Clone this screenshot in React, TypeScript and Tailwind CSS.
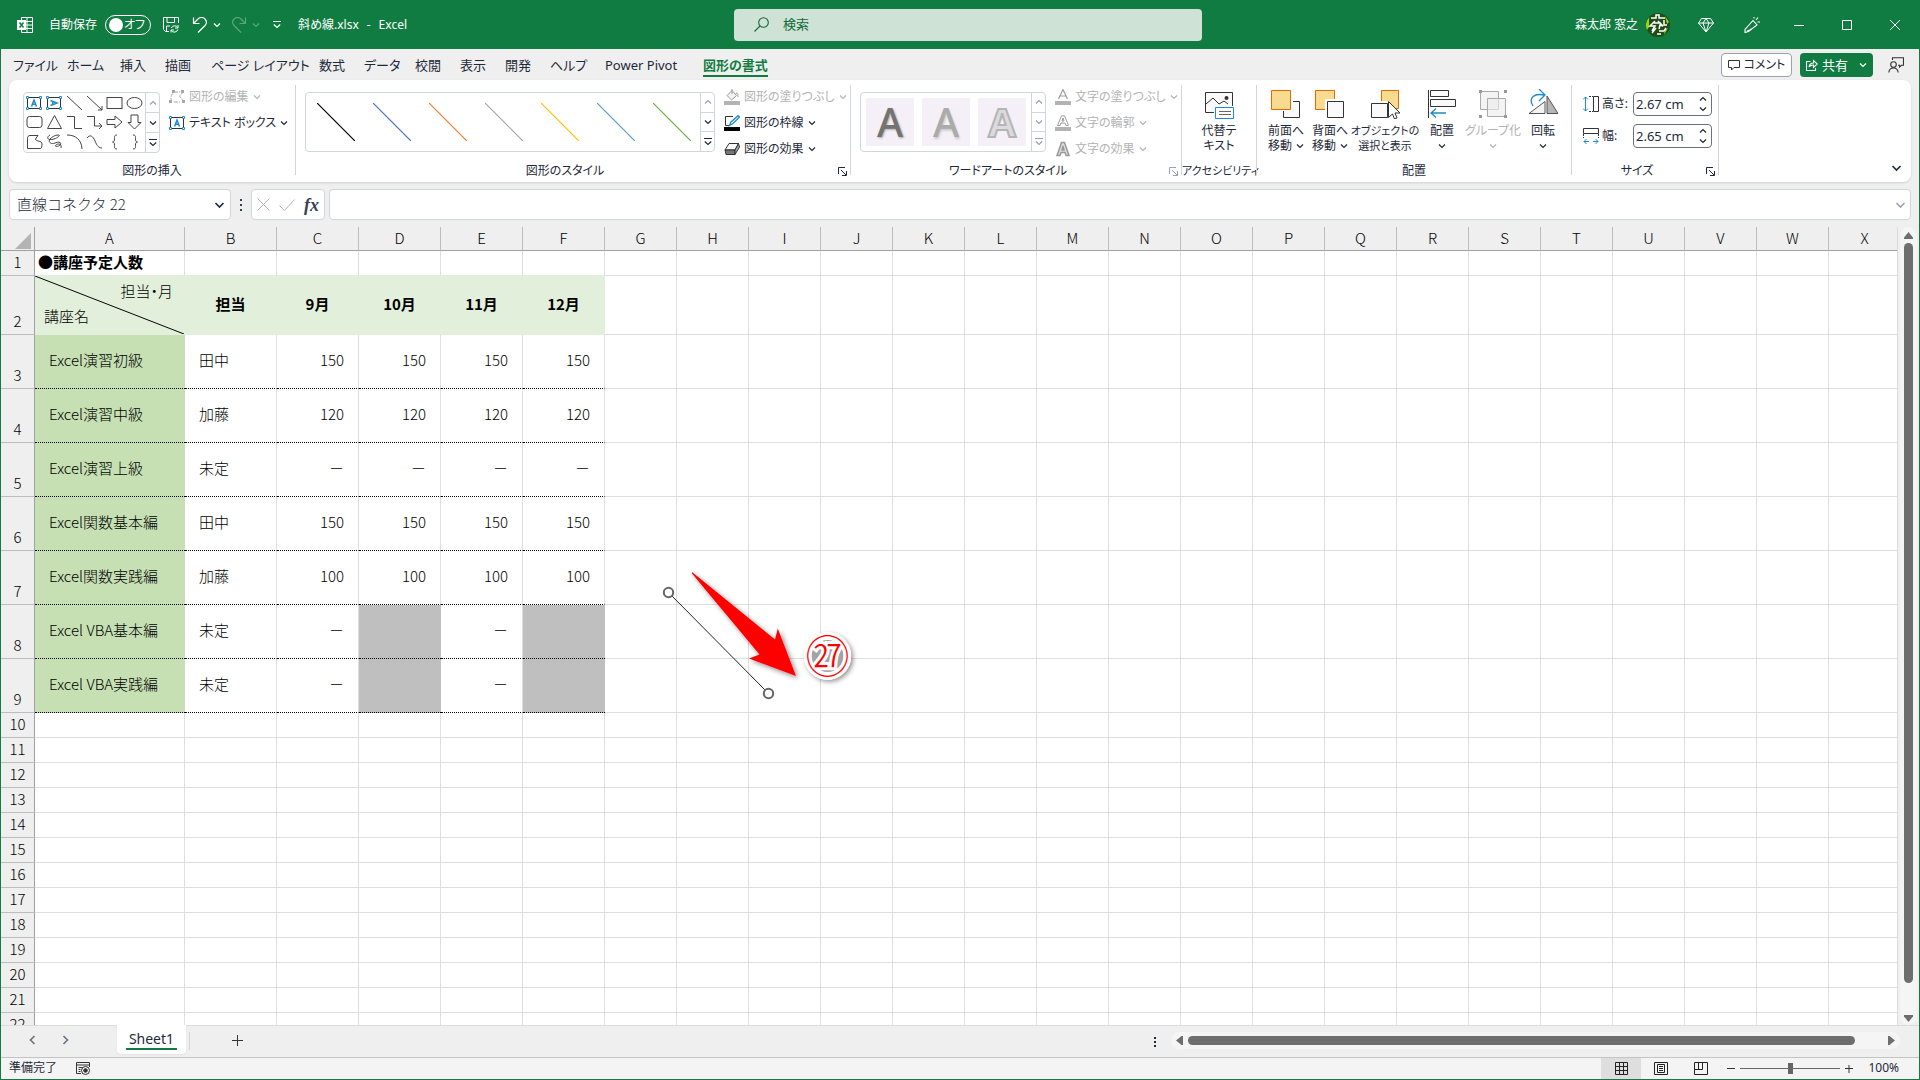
import type { ReactNode } from "react";
import clsx from "clsx";

type IconProps = { className?: string };

const Chevron = ({ className = "h-[6px] w-[8px]" }: IconProps) => (
  <svg viewBox="0 0 8 6" className={clsx("shrink-0", className)} fill="none" stroke="currentColor" strokeWidth="1.2">
    <path d="M1 1.5 4 4.5 7 1.5" />
  </svg>
);

const ExcelIcon = () => (
  <svg viewBox="0 0 16 16" className="h-4 w-4 shrink-0" fill="none" stroke="#fff">
    <path d="M4.5 3V.5h11v15h-11V13M10 .5v15M4.5 4.5h11M9 8h6.5M4.5 11.5h11" />
    <rect x="0" y="3" width="9" height="10" fill="#fff" stroke="none" />
    <path d="m2.5 5.5 4 5m0-5-4 5" stroke="#107c41" strokeWidth="1.5" />
  </svg>
);

const SaveIcon = () => (
  <svg viewBox="0 0 16 16" className="h-4 w-4 shrink-0" fill="none" stroke="#fff">
    <path d="M6 14.5H2.5l-2-2V.5h15V6M4 .5v5h7.5v-5M3.5 14.5V9H7" />
    <path d="M15 8v3h-3M8 15.5V13h3M8.3 11a3.6 3.6 0 0 1 6.4-.5M14.8 12.5a3.6 3.6 0 0 1-6.5 1" />
  </svg>
);

const UndoIcon = ({ className }: IconProps) => (
  <svg viewBox="0 0 16 16" className={clsx("h-4 w-4 shrink-0", className)} fill="none" stroke="currentColor" strokeWidth="1.2">
    <path d="M1.5.5v6h6M1.5 6.5 6 2a4.800 4.800 0 0 1 7 0c1.800 2 1.800 4.500 0 6.500L6 15.500" />
  </svg>
);

const MoreIcon = () => (
  <svg viewBox="0 0 10 9" className="h-[9px] w-[10px] shrink-0" fill="none" stroke="currentColor" strokeWidth="1.2">
    <path d="M1 1.5h8M1.8 4.5 5 7.5l3.2-3" />
  </svg>
);

const Avatar = () => (
  <svg viewBox="0 0 24 24" className="h-6 w-6 shrink-0">
    <circle cx="12" cy="12" r="12" fill="#1f4d16" />
    <path d="M3.5 4A12 12 0 0 0 1 17l2-3V7zM19 3l4 6-2 2zM22 15l-4 7 1-5z" fill="#9cd510" />
    <path d="M5 5h5V2h3v3h6M9 8l-5 5h5l-3 5M12 8l5 5-3-1-1 4M18 7v5h3M6 20l4-5M13 18h5l2-3M11 21h4M8 10h7" fill="none" stroke="#fff" strokeWidth="1.5" />
  </svg>
);

const DiamondIcon = () => (
  <svg viewBox="0 0 16 16" className="h-4 w-4 shrink-0" fill="none" stroke="#fff">
    <path d="M3.5 1.5h9l3 4.5L8 15 .5 6zM.5 6h15M8 1.5 5 6l3 9 3-9z" />
  </svg>
);

const PenIcon = () => (
  <svg viewBox="0 0 16 16" className="h-4 w-4 shrink-0" fill="none" stroke="#fff" strokeWidth="1.1">
    <path d="M9 3.5 13 8l-8.5 6.5-3.5 1v-3zM3 14l4-1.5v-1M10 1.5V0M12 3l2-2.5M13.5 5H16" />
  </svg>
);

const PersonChatIcon = () => (
  <svg viewBox="0 0 16 16" className="h-4 w-4 shrink-0" fill="none" stroke="#333" strokeWidth="1.1">
    <circle cx="5.5" cy="7.5" r="2.8" />
    <path d="M.8 15.5c.3-3 2-4.5 4.7-4.5s4.3 1.5 4.7 4.5M4.5 3V.8h11v7.5h-2L11.5 10V8.3h-1.5" />
  </svg>
);

const ShareIcon = () => (
  <svg viewBox="0 0 12 12" className="h-3 w-3 shrink-0" fill="none" stroke="#fff" strokeWidth="1.1">
    <path d="M4.5 2.5h-4v9h9V9M3 8c.5-3 2-4 4.5-4V1.5L11.3 5 7.5 8.5V6C5.5 6 4 6.5 3 8z" />
  </svg>
);

const EditShapeIcon = () => (
  <svg viewBox="0 0 16 14" className="h-[14px] w-4 shrink-0" fill="none" stroke="#a8a8a8">
    <path d="M5 2h6M2 12V8c0-3 1-4 3-5M5 12h6M14.5 1.5 10.5 6l4 5" strokeDasharray="4 1" />
    <path d="M0 10h3v3H0zM3 0h3v3H3zM12 0h3v3h-3zM13 10h3v3h-3z" fill="#a8a8a8" stroke="none" />
  </svg>
);

const TextBoxIcon = ({ turned }: { turned?: boolean }) => (
  <svg viewBox="0 0 16 14" className="h-[14px] w-4 shrink-0" fill="none">
    <rect x="1.5" y="1.5" width="13" height="11" stroke="#333" />
    <path d="M.5.5h2v2h-2zM13.5.5h2v2h-2zM.5 11.5h2v2h-2zM13.5 11.5h2v2h-2z" fill="#fff" stroke="#1e8bcd" />
    <path
      d="M5.5 10.5 8 4l2.5 6.5M6.3 8.3h3.4"
      stroke="#1e8bcd"
      strokeWidth="1.5"
      transform={turned ? "rotate(90 8 7)" : undefined}
    />
  </svg>
);

const shapeIcons: ReactNode[] = [
  <path d="M1 1 16 15" />,
  <g>
    <path d="M1 1 16 15" />
    <path d="M16 11v4h-4" />
  </g>,
  <rect x="1" y="2.5" width="15" height="11" />,
  <ellipse cx="8.5" cy="8" rx="7.5" ry="5.5" />,
  <rect x="1" y="2.5" width="15" height="11" rx="2.5" />,
  <path d="M8.5 1.5 15.5 14.5h-14z" />,
  <path d="M1 2.5h7.5v12H16" />,
  <path d="M1 2.5h7.5v9.5H16M13 9l3 3-3 3" />,
  <path d="M1 5.5h8V2l7 6-7 6v-3.500H1z" />,
  <path d="M5 1v7.5H2l6.5 6.5L15 8.5h-3V1z" />,
  <path d="M1.5 14.5v-10c0-2 1-3 2.5-3h8L9.5 5c0 3 6.5 1 6.5 5 0 2-.5 4.5-1.5 4.5z" />,
  <path d="M4 1c-5 3-1 6 4 4s7-4 4-4-6 2-8 4 0 6 5 4 7 0 5 2-6 2-4 0 6-1 5 3" />,
  <path d="M1 1c9 0 14.5 5 15 14" />,
  <path d="M1 4c3-4 6-2 8 3s4 7 7 7" />,
  <path d="M11 1C8 1 8.5 3 8.5 5S8 8 6.500 8C8 8 8.5 9 8.5 11s-.5 4 2.5 4" />,
  <path d="M7 1c3 0 2.5 2 2.5 4s.5 3 2 3c-1.500 0-2 1-2 3s.5 4-2.5 4" />,
];

const GalleryScroll = ({ disabled }: { disabled?: boolean }) => (
  <div className={clsx("flex w-[14px] shrink-0 flex-col divide-y divide-gray-300 border-l border-gray-300", disabled ? "text-gray-400" : "text-gray-800")}>
    <button className="flex flex-1 items-center justify-center text-gray-400" aria-label="前の行">
      <Chevron className="h-[6px] w-[8px] rotate-180" />
    </button>
    <button className="flex flex-1 items-center justify-center" aria-label="次の行">
      <Chevron />
    </button>
    <button className="flex flex-1 items-center justify-center" aria-label="その他">
      <MoreIcon />
    </button>
  </div>
);

const Launcher = ({ disabled }: { disabled?: boolean }) => (
  <button className={clsx("flex w-4 items-center justify-center", disabled ? "text-gray-400" : "text-gray-800")} aria-label="詳細">
    <svg viewBox="0 0 9 9" className="h-[9px] w-[9px]" fill="none" stroke="currentColor">
      <path d="M.5 7V.5H7M3 3l5 5M8.5 4v4.5H4" />
    </svg>
  </button>
);

type GroupProps = {
  label: string;
  width: string;
  launcher?: "on" | "off";
  small?: boolean;
  children: ReactNode;
};

const Group = ({ label, width, launcher, small, children }: GroupProps) => (
  <section className={clsx("flex shrink-0", width)}>
    <div className="flex min-w-0 flex-1 flex-col">
      <div className="flex h-[83px] items-start pt-3">{children}</div>
      <div className={clsx("flex h-4 leading-4", small ? "text-[11px]" : "text-[12px]")}>
        <span className="flex-1 text-center whitespace-nowrap">{label}</span>
        {launcher && <Launcher disabled={launcher === "off"} />}
      </div>
    </div>
    <div className="mt-[5px] h-[90px] w-px bg-gray-300" />
  </section>
);

type MenuItemProps = { icon: ReactNode; label: string; disabled?: boolean };

const MenuItem = ({ icon, label, disabled }: MenuItemProps) => (
  <button className={clsx("flex h-4 items-center gap-1 text-[12px] leading-4 whitespace-nowrap", disabled ? "text-[#b3b3b3]" : "text-gray-800")}>
    {icon}
    <span>{label}</span>
    <Chevron />
  </button>
);

const FillIcon = () => (
  <svg viewBox="0 0 16 16" className="h-4 w-4 shrink-0">
    <path d="M0 12h16v4H0z" fill="#b3b3b3" />
    <path d="m8 1.5 4.5 5L7.5 11 3 6.5zM8 0v5M12 4c2 0 2 2 2 4" fill="#f3f3f3" stroke="#999" />
  </svg>
);

const OutlineIcon = () => (
  <svg viewBox="0 0 16 16" className="h-4 w-4 shrink-0" fill="none">
    <path d="M0 12h16v4H0z" fill="#000" />
    <path d="M9 1.5H1.5v9H5" stroke="#333" />
    <path d="M14 .7 15.5 2 9 8.5l-3.5 2L7 7z" fill="#fff" stroke="#1e8bcd" strokeWidth="1.3" />
  </svg>
);

const EffectIcon = () => (
  <svg viewBox="0 0 16 16" className="h-4 w-4 shrink-0" stroke="#333" strokeLinejoin="round">
    <path d="M5 2.5h9.5L11 9H1z" fill="#fafafa" />
    <path d="M1 9h10v4.5H2z" fill="#777" />
    <path d="m11 9 3.5-6.5L15.5 6 11 13.500z" fill="#aaa" />
  </svg>
);

const LetterIcon = ({ kind }: { kind: "fill" | "outline" | "effect" }) => (
  <svg viewBox="0 0 16 16" className="h-4 w-4 shrink-0" fill="none" stroke="#9e9e9e">
    {kind === "fill" && <path d="M3.5 10 8 .5 12.5 10M5 7h6" strokeWidth="1.2" />}
    {kind === "outline" && <path d="M2.5 10.5 6.5.8h3l4 9.700h-2.500l-1-2.500H6l-1 2.500zM7 6h2L8 3z" />}
    {kind === "effect" && (
      <path d="M2 14.5 6.5 1.5h3L14 14.5h-3l-1-3H6l-1 3zM7 9h2L8 5z" fill="#ddd" stroke="#999" strokeWidth="1.5" />
    )}
    {kind !== "effect" && <path d="M0 12h16v4H0z" fill="#b3b3b3" stroke="none" />}
  </svg>
);

type BigButtonProps = {
  icon: ReactNode;
  lines: string[];
  width: string;
  disabled?: boolean;
  small?: boolean;
  chevron?: "inline" | "below";
};

const BigButton = ({ icon, lines, width, disabled, small, chevron }: BigButtonProps) => (
  <button
    className={clsx(
      "flex shrink-0 flex-col items-center leading-[15px] whitespace-nowrap",
      width,
      small ? "text-[11px]" : "text-[12px]",
      disabled ? "text-[#b3b3b3]" : "text-gray-800",
    )}
  >
    <svg viewBox="0 0 30 30" className="mb-1 h-[30px] w-[30px]" fill="none">
      {icon}
    </svg>
    {lines.map((line, i) => (
      <span key={line} className="flex items-center gap-1">
        {line}
        {chevron === "inline" && i === lines.length - 1 && <Chevron />}
      </span>
    ))}
    {chevron === "below" && (
      <span className="flex h-[15px] items-center">
        <Chevron />
      </span>
    )}
  </button>
);

const altTextIcon = (
  <g>
    <path d="M10 23.5H1.5v-20h27V17" stroke="#333" fill="#fafafa" />
    <path d="m2 15 7-6 6 6M15 15l5-3 4 3" stroke="#333" />
    <circle cx="22.5" cy="9" r="2" fill="#333" />
    <path d="M11.5 18.5h18v11h-18z" fill="#fff" stroke="#1e8bcd" />
    <path d="M15 22.5h12M15 25.5h12" stroke="#666" />
  </g>
);

const frontIcon = (
  <g>
    <path d="M12.5 12.5h16v16h-16z" fill="#fafafa" stroke="#333" />
    <path d="M0 0h22v22H0z" fill="#fff" />
    <path d="M.5 1.5h19v19H.5z" fill="#f8db8f" stroke="#dd6b00" />
  </g>
);

const backIcon = (
  <g>
    <path d="M.5 1.5h19v19H.5z" fill="#f8db8f" stroke="#dd6b00" />
    <path d="M10 10h20v20H10z" fill="#fff" />
    <path d="M12.5 12.5h16v16h-16z" fill="#fafafa" stroke="#333" />
  </g>
);

const selectIcon = (
  <g>
    <path d="M11.5 1.5h17v18h-17z" fill="#f8db8f" stroke="#dd6b00" />
    <path d="M0 12h18v18H0z" fill="#fff" />
    <path d="M1.5 14.5h16v14h-16z" fill="#fafafa" stroke="#333" />
    <path d="M18.5 12.5v16l4-3.5 2 5 2.5-1-2-5h5z" fill="#fff" stroke="#333" />
  </g>
);

const alignIcon = (
  <g>
    <path d="M1.5 1v28" stroke="#333" />
    <path d="M3.5 1.5h18v6h-18zM3.5 10.5h25v7h-25z" stroke="#333" fill="#fafafa" />
    <path d="M4 24h15M9 19.5 4 24l5 4.5" stroke="#1e8bcd" strokeWidth="1.3" />
  </g>
);

const groupIcon = (
  <g>
    <path d="M2.5 2.5h18v18h-18z" stroke="#aaa" fill="#f3f3f3" />
    <path d="M9.5 9.5h18v18h-18z" stroke="#aaa" fill="#ececec" fillOpacity=".6" />
    <path d="M1 1h3v3H1zM26 1h3v3h-3zM1 26h3v3H1zM26 26h3v3h-3z" fill="#999" />
  </g>
);

const rotateIcon = (
  <g>
    <path d="M1 24.5h16V12.5z" fill="#f3f3f3" stroke="#555" />
    <path d="M19 24.5V7l11 17.5z" fill="#b5b5b5" stroke="#555" />
    <path d="M5 17C0 9 6 4 16 6M11 0l6 6-6 6" stroke="#1e8bcd" strokeWidth="1.3" />
  </g>
);

const tabs = [
  { label: "ファイル", width: "w-[54px]" },
  { label: "ホーム", width: "w-[53px]" },
  { label: "挿入", width: "w-[45px]" },
  { label: "描画", width: "w-[46px]" },
  { label: "ページ レイアウト", width: "w-[108px]" },
  { label: "数式", width: "w-[45px]" },
  { label: "データ", width: "w-[51px]" },
  { label: "校閲", width: "w-[45px]" },
  { label: "表示", width: "w-[45px]" },
  { label: "開発", width: "w-[45px]" },
  { label: "ヘルプ", width: "w-[55px]" },
  { label: "Power Pivot", width: "w-[98px]" },
];

const TitleBar = () => (
  <header className="flex h-[49px] shrink-0 items-center bg-[#107c41] text-[12px] text-white">
    <div className="mr-[19px] flex flex-1 items-center pl-[17px]">
      <ExcelIcon />
      <label className="ml-4 flex items-center gap-2">
        自動保存
        <span className="relative flex h-5 w-[46px] items-center justify-between rounded-full border border-white pr-[5px] pl-[3px]">
          <input type="checkbox" className="absolute inset-0 appearance-none" />
          <span className="h-[14px] w-[14px] rounded-full bg-white" />
          オフ
        </span>
      </label>
      <button className="ml-3" aria-label="保存">
        <SaveIcon />
      </button>
      <button className="ml-[13px] flex items-center gap-[5px]" aria-label="元に戻す">
        <UndoIcon />
        <Chevron />
      </button>
      <button className="ml-[10px] flex items-center gap-[5px] text-[#5aa77d]" aria-label="やり直し">
        <UndoIcon className="-scale-x-100" />
        <Chevron />
      </button>
      <button className="ml-3" aria-label="クイック アクセス">
        <MoreIcon />
      </button>
      <span className="ml-4 flex gap-2">
        <span>斜め線.xlsx</span>
        <span>-</span>
        <span>Excel</span>
      </span>
    </div>
    <label className="flex h-8 w-[468px] items-center gap-[14px] rounded bg-[#cee2d6] pl-5 text-[13px] text-[#0f6b39]">
      <svg viewBox="0 0 15 15" className="h-[15px] w-[15px]" fill="none" stroke="currentColor" strokeWidth="1.1">
        <circle cx="9.5" cy="5.5" r="4.8" />
        <path d="M6 9 .5 14.5" />
      </svg>
      <input type="search" placeholder="検索" aria-label="検索" className="flex-1 bg-transparent outline-none placeholder:text-[#0f6b39]" />
    </label>
    <div className="flex flex-1 items-center justify-end pr-5">
      <span>森太郎 窓之</span>
      <span className="ml-2">
        <Avatar />
      </span>
      <button className="ml-7" aria-label="Premium">
        <DiamondIcon />
      </button>
      <button className="ml-[30px]" aria-label="新機能">
        <PenIcon />
      </button>
      <button className="ml-[34px]" aria-label="最小化">
        <svg viewBox="0 0 10 10" className="h-[10px] w-[10px]" stroke="#fff">
          <path d="M0 5.5h10" />
        </svg>
      </button>
      <button className="ml-[38px]" aria-label="最大化">
        <svg viewBox="0 0 10 10" className="h-[10px] w-[10px]" fill="none" stroke="#fff">
          <path d="M.5.5h9v9h-9z" />
        </svg>
      </button>
      <button className="ml-[38px]" aria-label="閉じる">
        <svg viewBox="0 0 10 10" className="h-[10px] w-[10px]" stroke="#fff">
          <path d="m0 0 10 10M10 0 0 10" />
        </svg>
      </button>
    </div>
  </header>
);

const TabBar = () => (
  <nav className="flex h-[31px] shrink-0 items-center pr-2 pl-3 text-[13px] leading-5 whitespace-nowrap">
    {tabs.map((tab) => (
      <a key={tab.label} href="#" className={tab.width}>
        {tab.label}
      </a>
    ))}
    <a href="#" className="mt-[2px] border-b-2 border-[#107c41] font-bold text-[#107c41]">
      図形の書式
    </a>
    <div className="flex-1" />
    <button className="flex h-6 w-[71px] items-center justify-center gap-1 rounded border border-gray-400 bg-white text-[12px]">
      <svg viewBox="0 0 12 12" className="h-3 w-3" fill="none" stroke="#333">
        <path d="M.5 1.5h11v7H6L3.5 11V8.5h-3z" />
      </svg>
      コメント
    </button>
    <button className="ml-2 flex h-6 w-[73px] items-center justify-between rounded bg-[#107c41] px-[6px] text-[13px] text-white">
      <span className="flex items-center gap-1">
        <ShareIcon />
        共有
      </span>
      <Chevron />
    </button>
    <button className="mr-[7px] ml-[15px]" aria-label="プレゼンス">
      <PersonChatIcon />
    </button>
  </nav>
);

const styleLines = ["#000000", "#4472c4", "#ed7d31", "#a5a5a5", "#ffc000", "#5b9bd5", "#70ad47"];

const SizeField = ({ id, label, value, icon }: { id: string; label: string; value: string; icon: ReactNode }) => (
  <div className="flex h-6 items-center">
    <svg viewBox="0 0 16 16" className="h-4 w-4 shrink-0" fill="none">
      {icon}
    </svg>
    <label htmlFor={id} className="w-[34px] pl-[3px] text-[12px] whitespace-nowrap">
      {label}
    </label>
    <div className="flex h-6 w-[79px] items-center rounded border border-gray-500 bg-white pr-1">
      <input id={id} defaultValue={value} className="w-0 flex-1 pl-[2px] text-[13px] leading-5 outline-none" />
      <div className="flex flex-col gap-1">
        <button aria-label="増やす">
          <Chevron className="block h-[6px] w-[8px] rotate-180" />
        </button>
        <button aria-label="減らす">
          <Chevron className="block h-[6px] w-[8px]" />
        </button>
      </div>
    </div>
  </div>
);

const Ribbon = () => (
  <div className="mx-2 flex h-[102px] shrink-0 rounded-lg bg-white text-gray-800 shadow">
    <Group label="図形の挿入" width="w-[287px]">
      <div className="ml-[14px] flex h-[61px] w-[137px] rounded border border-gray-300">
        <div className="grid flex-1 grid-cols-6 place-items-center">
          <TextBoxIcon />
          <TextBoxIcon turned />
          {shapeIcons.map((shape, i) => (
            <svg key={i} viewBox="0 0 17 16" className="h-4 w-[17px]" fill="none" stroke="#444">
              {shape}
            </svg>
          ))}
        </div>
        <GalleryScroll />
      </div>
      <div className="-mt-[3px] ml-[9px] flex flex-col gap-[10px]">
        <MenuItem disabled icon={<EditShapeIcon />} label="図形の編集" />
        <MenuItem icon={<TextBoxIcon />} label="テキスト ボックス" />
      </div>
    </Group>

    <Group label="図形のスタイル" width="w-[555px]" launcher="on">
      <div className="ml-[9px] flex h-[60px] w-[410px] rounded border border-gray-300">
        <div className="flex flex-1 pl-[2px]">
          {styleLines.map((color) => (
            <button key={color} className="flex w-14 items-center justify-center" aria-label="線のスタイル">
              <svg viewBox="0 0 38 38" className="h-[38px] w-[38px]" stroke={color} strokeWidth="1.2">
                <path d="m0 0 38 38" />
              </svg>
            </button>
          ))}
        </div>
        <GalleryScroll />
      </div>
      <div className="-mt-[3px] ml-[9px] flex flex-col gap-[10px]">
        <MenuItem disabled icon={<FillIcon />} label="図形の塗りつぶし" />
        <MenuItem icon={<OutlineIcon />} label="図形の枠線" />
        <MenuItem icon={<EffectIcon />} label="図形の効果" />
      </div>
    </Group>

    <Group label="ワードアートのスタイル" width="w-[331px]" launcher="off">
      <div className="ml-[9px] flex h-[60px] w-[186px] shrink-0 rounded border border-gray-300">
        <div className="flex flex-1 items-center gap-2 pl-[5px] text-[40px] leading-[48px] font-medium">
          <button className="h-12 w-12 bg-[#f5f0f7] text-[#737373] [text-shadow:1px_1px_2px_#aaa]">A</button>
          <button className="h-12 w-12 bg-[#f5f0f7] text-[#ababab] [text-shadow:1px_2px_2px_#ccc]">A</button>
          <button className="h-12 w-12 bg-[#f5f0f7] font-bold text-[#dcdadd] [-webkit-text-stroke:2px_#b5b5b5]">A</button>
        </div>
        <GalleryScroll disabled />
      </div>
      <div className="-mt-[3px] ml-[9px] flex flex-col gap-[10px]">
        <MenuItem disabled icon={<LetterIcon kind="fill" />} label="文字の塗りつぶし" />
        <MenuItem disabled icon={<LetterIcon kind="outline" />} label="文字の輪郭" />
        <MenuItem disabled icon={<LetterIcon kind="effect" />} label="文字の効果" />
      </div>
    </Group>

    <Group label="アクセシビリティ" width="w-[75px]" small>
      <div className="-mt-[3px] flex flex-1 justify-center">
        <BigButton width="w-[60px]" icon={altTextIcon} lines={["代替テ", "キスト"]} />
      </div>
    </Group>

    <Group label="配置" width="w-[315px]">
      <div className="-mt-[3px] flex pl-[7px]">
        <BigButton width="w-[44px]" icon={frontIcon} lines={["前面へ", "移動"]} chevron="inline" />
        <BigButton width="w-[44px]" icon={backIcon} lines={["背面へ", "移動"]} chevron="inline" />
        <BigButton width="w-[66px]" icon={selectIcon} lines={["オブジェクトの", "選択と表示"]} small />
        <BigButton width="w-[48px]" icon={alignIcon} lines={["配置"]} chevron="below" />
        <BigButton width="w-[54px]" icon={groupIcon} lines={["グループ化"]} chevron="below" disabled />
        <BigButton width="w-[46px]" icon={rotateIcon} lines={["回転"]} chevron="below" />
      </div>
    </Group>

    <Group label="サイズ" width="w-[147px]" launcher="on">
      <div className="ml-[11px] flex flex-col gap-2">
        <SizeField
          id="shape-height"
          label="高さ:"
          value="2.67 cm"
          icon={
            <g>
              <path d="M2.5 1v14M0 3.5 2.5 1 5 3.5M0 12.5 2.5 15 5 12.5" stroke="#1e8bcd" />
              <path d="M10.5.5h5v15h-5z" stroke="#333" />
              <path d="M6 .5h4M6 15.5h4" stroke="#333" strokeDasharray="2 1" />
            </g>
          }
        />
        <SizeField
          id="shape-width"
          label="幅:"
          value="2.65 cm"
          icon={
            <g>
              <path d="M.5.5h15v5H.5z" stroke="#333" />
              <path d="M.5 6v4M15.5 6v4" stroke="#333" strokeDasharray="2 1" />
              <path d="M1 13.5h5M10 13.5h5M3.5 11 1 13.5 3.5 16M12.5 11l2.5 2.5-2.5 2.5" stroke="#1e8bcd" />
            </g>
          }
        />
      </div>
    </Group>

    <button className="mr-[9px] mb-[10px] ml-auto self-end" aria-label="リボンを折りたたむ">
      <Chevron className="h-[8px] w-[11px]" />
    </button>
  </div>
);

const FormulaBar = () => (
  <div className="mx-2 mt-[7px] flex h-[31px] shrink-0 items-stretch">
    <div className="flex w-[222px] items-center rounded border border-gray-300 bg-white pr-[5px] pl-[7px]">
      <input
        aria-label="名前ボックス"
        defaultValue="直線コネクタ 22"
        className="w-0 flex-1 text-[15px] font-light text-gray-800 outline-none [font-family:'Noto_Sans_CJK_JP',sans-serif] [font-feature-settings:normal]"
      />
      <Chevron className="h-[8px] w-[11px]" />
    </div>
    <div className="flex w-5 flex-col items-center justify-center gap-[3px]">
      <span className="h-[2px] w-[2px] bg-gray-700" />
      <span className="h-[2px] w-[2px] bg-gray-700" />
      <span className="h-[2px] w-[2px] bg-gray-700" />
    </div>
    <div className="mr-1 flex w-[74px] items-center justify-between rounded border border-gray-300 bg-white px-[5px]">
      <button aria-label="キャンセル">
        <svg viewBox="0 0 13 13" className="h-[13px] w-[13px]" stroke="#b5b5b5">
          <path d="m.5.5 12 12M12.5.5l-12 12" />
        </svg>
      </button>
      <button aria-label="入力">
        <svg viewBox="0 0 16 12" className="h-3 w-4" fill="none" stroke="#b5b5b5">
          <path d="m.5 6.5 5 5 10-11" />
        </svg>
      </button>
      <button className="text-[18px] leading-5 font-bold text-gray-700 italic [font-family:'Liberation_Serif',serif]" aria-label="関数の挿入">
        fx
      </button>
    </div>
    <div className="flex flex-1 items-center rounded border border-gray-300 bg-white pr-1">
      <input aria-label="数式バー" className="flex-1 px-2 outline-none" />
      <Chevron className="h-[8px] w-[11px] text-gray-400" />
    </div>
  </div>
);

const columns = "ABCDEFGHIJKLMNOPQRSTUVWX".split("");
const extraColumns = columns.slice(6);

const courses = [
  { name: "Excel演習初級", teacher: "田中", counts: ["150", "150", "150", "150"] },
  { name: "Excel演習中級", teacher: "加藤", counts: ["120", "120", "120", "120"] },
  { name: "Excel演習上級", teacher: "未定", counts: ["－", "－", "－", "－"] },
  { name: "Excel関数基本編", teacher: "田中", counts: ["150", "150", "150", "150"] },
  { name: "Excel関数実践編", teacher: "加藤", counts: ["100", "100", "100", "100"] },
  { name: "Excel VBA基本編", teacher: "未定", counts: ["－", null, "－", null] },
  { name: "Excel VBA実践編", teacher: "未定", counts: ["－", null, "－", null] },
];

const emptyRows = Array.from({ length: 13 }, (_, i) => i + 10);

const RowHeader = ({ n }: { n: number }) => (
  <th scope="row" className="border-r border-b border-[#a0a0a0] border-b-[#bdbdbd] bg-[#efefef] pb-[3px] align-bottom font-light">
    {n}
  </th>
);

const ExtraCells = () => (
  <>
    {extraColumns.map((c) => (
      <td key={c} className="border-r border-b border-[#dedede]" />
    ))}
  </>
);

const Sheet = () => (
  <table className="w-[1896px] table-fixed border-separate border-spacing-0 bg-white text-[15px] leading-5 font-light text-black [font-family:'Noto_Sans_CJK_JP',sans-serif] [font-feature-settings:normal]">
    <colgroup>
      <col className="w-[34px]" />
      <col className="w-[150px]" />
      <col className="w-[92px]" />
      <col className="w-[82px]" span={4} />
      <col className="w-[72px]" span={18} />
    </colgroup>
    <thead>
      <tr className="h-6 bg-[#efefef]">
        <th className="border-r border-b border-[#a0a0a0] p-0">
          <svg viewBox="0 0 16 16" className="mt-1 mr-[3px] ml-auto h-4 w-4" fill="#b3b3b3">
            <path d="M16 0v16H0z" />
          </svg>
        </th>
        {columns.map((c) => (
          <th key={c} scope="col" className="border-r border-b border-[#bdbdbd] border-b-[#a0a0a0] p-0 pb-[2px] font-light">
            {c}
          </th>
        ))}
      </tr>
    </thead>
    <tbody>
      <tr className="h-[25px]">
        <RowHeader n={1} />
        <td className="border-r border-b border-[#dedede] border-b-[#e2efda] p-0 pb-[3px] pl-[3px] font-bold whitespace-nowrap">●講座予定人数</td>
        {columns.slice(1, 6).map((c) => (
          <td key={c} className="border-r border-b border-[#dedede] border-b-[#e2efda]" />
        ))}
        <ExtraCells />
      </tr>
      <tr className="h-[59px]">
        <RowHeader n={2} />
        <td className="relative border-r border-b border-[#e2efda] bg-[#e2efda] p-0 pb-[3px]">
          <svg viewBox="0 0 150 59" preserveAspectRatio="none" className="absolute inset-0 h-full w-full" stroke="#000">
            <path d="m0 0 150 59" />
          </svg>
          <div className="pr-[11px] pb-[5px] text-right [font-feature-settings:'palt']">担当・月</div>
          <div className="pl-[9px]">講座名</div>
        </td>
        {["担当", "9月", "10月", "11月", "12月"].map((h) => (
          <td key={h} className="border-r border-b border-[#e2efda] bg-[#e2efda] p-0 pb-[3px] text-center font-bold">
            {h}
          </td>
        ))}
        <ExtraCells />
      </tr>
      {courses.map((course, i) => (
        <tr key={course.name} className="h-[54px]">
          <RowHeader n={i + 3} />
          <td className="border-b border-dotted border-black bg-[#c6e0b4] p-0 pb-[3px] pl-[14px] whitespace-nowrap">{course.name}</td>
          <td className="border-r border-[#dedede] p-0 pb-[3px] pl-[14px] [border-bottom:1px_dotted_#000]">{course.teacher}</td>
          {course.counts.map((count, j) => (
            <td
              key={j}
              className={clsx(
                "p-0 pr-[14px] pb-[3px] text-right [border-bottom:1px_dotted_#000]",
                count === null ? "bg-[#bfbfbf]" : "border-r border-[#dedede]",
              )}
            >
              {count}
            </td>
          ))}
          <ExtraCells />
        </tr>
      ))}
      {emptyRows.map((n) => (
        <tr key={n} className="h-[25px]">
          <RowHeader n={n} />
          {columns.slice(0, 6).map((c) => (
            <td key={c} className="border-r border-b border-[#dedede]" />
          ))}
          <ExtraCells />
        </tr>
      ))}
    </tbody>
  </table>
);

// Connector shape on the sheet with the step marker beside it
const Drawing = () => (
  <svg viewBox="0 0 220 150" className="absolute top-[343px] left-[649px] h-[150px] w-[220px] overflow-visible" fill="none">
    <defs>
      <filter id="soft" x="-30%" y="-30%" width="160%" height="160%">
        <feDropShadow dx="2" dy="2" stdDeviation="2.5" floodColor="#000" floodOpacity=".45" />
      </filter>
    </defs>
    <path d="M18.5 22.5 118.5 123.5" stroke="#222" />
    <circle cx="18.5" cy="22.5" r="4.7" fill="#fff" stroke="#666" strokeWidth="2" />
    <circle cx="118.5" cy="123.5" r="4.7" fill="#fff" stroke="#666" strokeWidth="2" />
    <path d="m42 2 83 67.5 2.8-11L146 106l-47-17.5 10.5-4L42 3.5z" fill="#f00" filter="url(#soft)" />
    <circle cx="177.5" cy="86" r="23.5" fill="#fff" filter="url(#soft)" />
    <circle cx="177.5" cy="86" r="16" fill="#a3a3a3" />
    <text
      x="177.5"
      y="103"
      textAnchor="middle"
      fill="#f00"
      stroke="#fff"
      strokeWidth="6"
      paintOrder="stroke"
      className="text-[44px] font-light [font-family:'Noto_Sans_CJK_JP',sans-serif]"
    >
      ㉗
    </text>
  </svg>
);

const Arrow = ({ className }: IconProps) => (
  <svg viewBox="0 0 9 7" className={clsx("h-[7px] w-[9px] shrink-0", className)} fill="#6e6e6e">
    <path d="M4.5 0 9 5.5V7H0V5.5z" />
  </svg>
);

const SheetBar = () => (
  <div className="flex h-8 shrink-0 items-start border-t border-[#dcdcdc] text-gray-500">
    <button className="mt-[10px] ml-[26px]" aria-label="前のシート">
      <Chevron className="h-[8px] w-[11px] rotate-90" />
    </button>
    <button className="mt-[10px] ml-[22px]" aria-label="次のシート">
      <Chevron className="h-[8px] w-[11px] -rotate-90" />
    </button>
    <button className="-mt-px ml-[46px] flex h-[29px] w-[69px] justify-center rounded-b bg-white text-[14px] leading-[18px] text-gray-800 shadow-xs">
      <span className="mt-[5px] h-5 border-b-2 border-[#107c41] px-[3px]">Sheet1</span>
    </button>
    <div className="mt-[6px] ml-[3px] h-[18px] w-px bg-gray-300" />
    <button className="mt-[9px] ml-[42px]" aria-label="新しいシート">
      <svg viewBox="0 0 11 11" className="h-[11px] w-[11px]" stroke="#333">
        <path d="M5.5 0v11M0 5.5h11" />
      </svg>
    </button>
    <div className="flex-1" />
    <div className="mt-[11px] flex flex-col gap-[2px]">
      <span className="h-[2px] w-[2px] bg-gray-800" />
      <span className="h-[2px] w-[2px] bg-gray-800" />
      <span className="h-[2px] w-[2px] bg-gray-800" />
    </div>
    <div className="mt-[6px] mr-[19px] ml-[15px] flex h-[17px] w-[38%] items-center rounded-full bg-[#f5f5f5] px-1">
      <Arrow className="-rotate-90" />
      <div className="mr-[82px] ml-1 h-[9px] flex-1 rounded-full bg-[#6e6e6e]" />
      <Arrow className="-ml-[50px] rotate-90" />
    </div>
  </div>
);

const StatusBar = () => (
  <footer className="flex h-[22px] shrink-0 items-stretch border-t border-[#c4c4c4] bg-[#f4f4f4] text-[12px] leading-5 text-gray-800">
    <span className="pl-2">準備完了</span>
    <button className="ml-[19px]" aria-label="マクロの記録">
      <svg viewBox="0 0 14 13" className="h-[13px] w-[14px]" fill="none" stroke="#333">
        <path d="M5 11.5H.5V.5h13V5M.5 3h13M2.5 5.5h4M2.5 7.5h2M2.5 9.5h2" />
        <circle cx="9.5" cy="8.5" r="4" />
        <circle cx="9.5" cy="8.5" r="1.8" fill="#333" />
      </svg>
    </button>
    <div className="flex-1" />
    <button className="flex w-10 items-center justify-center bg-[#dedede]" aria-label="標準">
      <svg viewBox="0 0 13 13" className="h-[13px] w-[13px]" fill="none" stroke="#222">
        <path d="M.5.5h12v12H.5zM4.5.5v12M8.5.5v12M.5 4.5h12M.5 8.5h12" />
      </svg>
    </button>
    <button className="flex w-10 items-center justify-center" aria-label="ページ レイアウト">
      <svg viewBox="0 0 14 13" className="h-[13px] w-[14px]" fill="none" stroke="#222">
        <path d="M.5.5h13v12H.5zM3.5 2.5h7v8h-7zM5 4.5h4M5 6.5h4M5 8.5h4" />
      </svg>
    </button>
    <button className="flex w-10 items-center justify-center" aria-label="改ページ プレビュー">
      <svg viewBox="0 0 14 13" className="h-[13px] w-[14px]" fill="none" stroke="#222">
        <path d="M.5.5h13v12H.5zM4.5.5v7M8.5.5v7M.5 7.5h8" />
      </svg>
    </button>
    <button className="ml-[6px] flex w-2 items-center" aria-label="縮小">
      <svg viewBox="0 0 8 8" className="h-2 w-2" stroke="#333">
        <path d="M0 3.5h8" />
      </svg>
    </button>
    <input
      type="range"
      aria-label="ズーム"
      defaultValue="50"
      className="mx-[5px] w-[100px] appearance-none bg-transparent [&::-webkit-slider-runnable-track]:h-px [&::-webkit-slider-runnable-track]:bg-[#666] [&::-webkit-slider-thumb]:-mt-[5px] [&::-webkit-slider-thumb]:h-[11px] [&::-webkit-slider-thumb]:w-[5px] [&::-webkit-slider-thumb]:appearance-none [&::-webkit-slider-thumb]:bg-[#666]"
    />
    <button className="flex w-2 items-center" aria-label="拡大">
      <svg viewBox="0 0 8 8" className="h-2 w-2" stroke="#333">
        <path d="M0 3.5h8M4 0v8" />
      </svg>
    </button>
    <span className="mr-5 ml-3 w-[34px] text-right">100%</span>
  </footer>
);

export default function App() {
  return (
    <div className="flex h-screen flex-col overflow-hidden bg-[#efefef] [font-family:'Noto_Sans','Noto_Sans_CJK_JP',sans-serif] [font-feature-settings:'palt']">
      <TitleBar />
      <div className="flex min-h-0 flex-1 flex-col border-x border-b border-[#107c41] text-gray-800">
        <TabBar />
        <Ribbon />
        <FormulaBar />
        <main className="mt-[7px] flex min-h-0 flex-1">
          <div className="relative min-w-0 flex-1 overflow-hidden border-r border-[#dcdcdc]">
            <Sheet />
            <Drawing />
          </div>
          <div className="mx-[2px] flex w-[17px] flex-col items-center rounded-full bg-[#f5f5f5] pt-[5px] pb-[3px]">
            <Arrow />
            <div className="mt-1 mb-8 w-[9px] flex-1 rounded-full bg-[#6e6e6e]" />
            <Arrow className="rotate-180" />
          </div>
        </main>
        <SheetBar />
        <StatusBar />
      </div>
    </div>
  );
}
